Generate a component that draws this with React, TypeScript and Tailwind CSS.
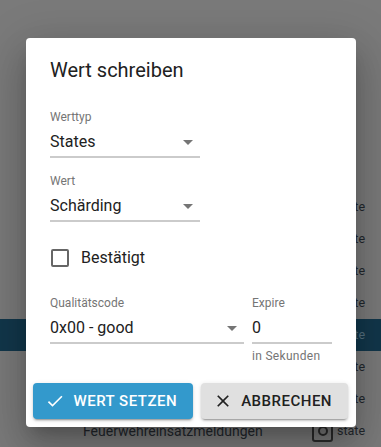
import React from 'react';

const font = { fontFamily: 'Roboto, "Liberation Sans", sans-serif' };

const Caret: React.FC = () => (
    <svg width="10" height="5" viewBox="0 0 10 5">
        <path d="M0 0l5 5 5-5z" fill="#757575" />
    </svg>
);

type FieldProps = {
    label: string;
    value: string;
    className: string;
    select?: boolean;
    helper?: string;
};

const Field: React.FC<FieldProps> = ({ label, value, className, select, helper }) => (
    <div className={`flex flex-col ${className}`}>
        <span className="text-xs leading-4 text-[#757575]">{label}</span>
        <div className="mt-[5px] flex h-6 items-center justify-between pr-[7px]">
            <span className="text-base leading-6 text-[#212121]">{value}</span>
            {select && <Caret />}
        </div>
        <div className="mt-[2px] h-[2px] bg-[#cbcbcb]" />
        {helper && <span className="mt-1 text-xs leading-4 tracking-[0.3px] text-[#757575]">{helper}</span>}
    </div>
);

// rows of the table behind the modal
const rows = [0, 1, 2, 3, 4, 5, 6, 7];

const btn =
    'flex h-9 shrink-0 items-center whitespace-nowrap rounded pl-3 pr-4 text-[15px] font-medium uppercase tracking-[0.5px] shadow-[0_3px_1px_-2px_rgba(0,0,0,0.2),0_2px_2px_0_rgba(0,0,0,0.14),0_1px_5px_0_rgba(0,0,0,0.12)]';

const App: React.FC = () => {
    return (
        <div className="relative h-[447px] w-[381px] overflow-hidden bg-[#7a7a7a]" style={font}>
            {/* background list (dimmed) */}
            <div className="flex flex-col pt-[191px]">
                {rows.map((i) => (
                    <div
                        key={i}
                        className={`flex h-8 items-center ${i === 4 ? 'bg-[#12374b] text-[#55707f]' : 'text-[#22272c]'}`}
                    >
                        <span className="w-[312px] shrink-0 whitespace-nowrap pl-[83px] text-sm">
                            {i === 7 ? 'Feuerwehreinsatzmeldungen' : ''}
                        </span>
                        <span className="flex w-[25px] shrink-0 items-center">
                            {i === 7 && (
                                <span className="flex h-[21px] w-[21px] items-center justify-center rounded-[3px] border-2 border-[#2a2a2a]">
                                    <span className="h-[10px] w-[10px] rounded-full border-2 border-[#2a2a2a]" />
                                </span>
                            )}
                        </span>
                        <span className="shrink-0 text-[12.5px]">state</span>
                    </div>
                ))}
            </div>

            {/* dialog */}
            <div className="absolute left-[26px] top-[38px] flex w-[330px] flex-col rounded bg-white shadow-[0_11px_15px_-7px_rgba(0,0,0,0.2),0_24px_38px_3px_rgba(0,0,0,0.14),0_9px_46px_8px_rgba(0,0,0,0.12)]">
                <div className="px-6 pt-4">
                    <h2 className="text-xl leading-8 text-[#212121]">Wert schreiben</h2>
                </div>

                <div className="flex flex-col px-6 pt-[23px]">
                    <Field label="Werttyp" value="States" select className="w-[150px]" />
                    <Field label="Wert" value="Schärding" select className="mt-[15px] w-[150px]" />

                    <label className="mt-6 flex h-6 items-center">
                        <span className="ml-px h-[18px] w-[18px] rounded-[2px] border-2 border-[#666]" />
                        <span className="ml-3 text-base leading-6 text-[#212121]">Bestätigt</span>
                    </label>

                    <div className="mt-[25px] flex gap-2">
                        <Field label="Qualitätscode" value="0x00 - good" select className="w-[194px]" />
                        <Field label="Expire" value="0" helper="in Sekunden" className="w-[80px]" />
                    </div>
                </div>

                <div className="mt-[11px] flex justify-end gap-2 p-2">
                    <button className={`${btn} bg-[#3399cc] text-white`}>
                        <svg width="20" height="20" viewBox="0 0 24 24" className="mr-2">
                            <path d="M9 16.17 4.83 12l-1.42 1.41L9 19 21 7l-1.41-1.41z" fill="currentColor" />
                        </svg>
                        Wert setzen
                    </button>
                    <button className={`${btn} bg-[#e0e0e0] text-[#212121]`}>
                        <svg width="20" height="20" viewBox="0 0 24 24" className="mr-2">
                            <path
                                d="M19 6.41 17.59 5 12 10.59 6.41 5 5 6.41 10.59 12 5 17.59 6.41 19 12 13.41 17.59 19 19 17.59 13.41 12z"
                                fill="currentColor"
                            />
                        </svg>
                        Abbrechen
                    </button>
                </div>
            </div>
        </div>
    );
};

export default App;
